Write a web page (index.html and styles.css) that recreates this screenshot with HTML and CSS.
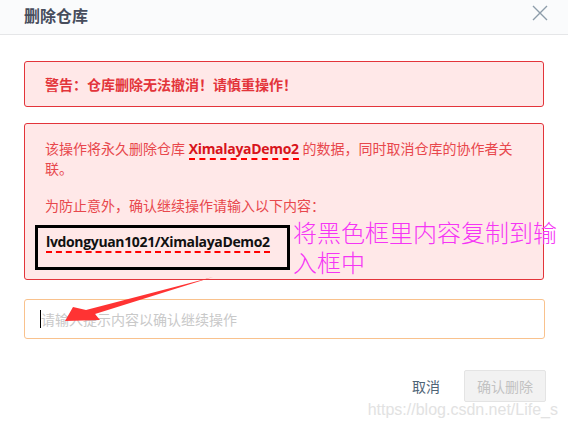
FILE: index.html
```html
<!DOCTYPE html>
<html lang="zh-CN">
<head>
<meta charset="utf-8">
<title>删除仓库</title>
<link rel="stylesheet" href="styles.css">
</head>
<body>
<div class="dialog">
  <div class="header">
    <div class="title">删除仓库</div>
    <svg class="close" width="16" height="16" viewBox="0 0 16 16"><path d="M1 1 L15 15 M15 1 L1 15" stroke="#8d9caa" stroke-width="1.4" fill="none"/></svg>
  </div>
  <div class="body">
    <div class="alert alert-warn">警告：仓库删除无法撤消！请慎重操作！</div>
    <div class="alert alert-info">
      <p class="para"><span class="seg">该操作将永久删除仓库</span> <span class="repo">XimalayaDemo2</span> <span class="seg">的数据，同时取消仓库的协作者关</span><br><span class="seg">联。</span></p>
      <p class="para para2">为防止意外，确认继续操作请输入以下内容：</p>
      <p class="code-line"><span class="code">lvdongyuan1021/XimalayaDemo2</span></p>
      <div class="mark-box"></div>
      <div class="mark-text">将黑色框里内容复制到输<br>入框中</div>
    </div>
    <div class="input"><span class="caret"></span><span class="placeholder">请输入提示内容以确认继续操作</span></div>
    <div class="footer">
      <span class="btn-cancel">取消</span>
      <span class="btn-confirm">确认删除</span>
    </div>
  </div>
</div>
<svg class="arrow" width="568" height="427" viewBox="0 0 568 427">
  <polygon points="213,277 86,310 73,307 65,321 100,320 95,314" fill="#ff3333"/>
</svg>
<div class="watermark">https://blog.csdn.net/Life_s</div>
</body>
</html>
```
FILE: styles.css
```css
html, body {
  margin: 0;
  padding: 0;
  background: #ffffff;
}
body {
  width: 568px;
  height: 427px;
  overflow: hidden;
  position: relative;
  font-family: "Open Sans", "Noto Sans CJK SC", sans-serif;
  font-size: 14px;
}
.dialog {
  width: 568px;
}
.header {
  height: 34px;
  background: #fafbfc;
  border-bottom: 1px solid #e5e6e8;
  display: flex;
  justify-content: space-between;
  align-items: flex-start;
  padding: 0 20px 0 24px;
  box-sizing: content-box;
  width: 524px;
}
.title {
  font-family: "Noto Sans CJK SC", sans-serif;
  font-size: 16px;
  font-weight: 700;
  color: #474d5c;
  line-height: 20px;
  margin-top: 5px;
}
.close {
  margin-top: 5px;
}
.body {
  padding: 26px 24px 0 24px;
}
.alert {
  border: 1px solid #e3343a;
  border-radius: 3px;
  background: #ffe8e8;
  padding: 12px 20px;
  line-height: 20px;
}
.alert-warn {
  color: #e3343a;
  font-weight: 700;
  font-family: "Noto Sans CJK SC", sans-serif;
  font-size: 14px;
  height: 20px;
}
.alert-info {
  margin-top: 16px;
  padding: 15px 20px 27px 20px;
  color: #e8474c;
  position: relative;
}
.para {
  margin: 0;
  line-height: 20px;
}
.para2 {
  margin-top: 17px;
  width: max-content;
}
.repo {
  font-weight: 700;
  color: #d8141b;
  letter-spacing: -0.3px;
  border-bottom: 2px dashed #f00;
}
.code-line {
  margin: 16px 0 0 1px;
  line-height: 20px;
  width: max-content;
}
.code {
  font-weight: 700;
  color: #111;
  letter-spacing: -0.35px;
  border-bottom: 2px dashed #f00;
}
.mark-box {
  position: absolute;
  left: 10px;
  top: 101px;
  width: 255px;
  height: 45px;
  box-sizing: border-box;
  border: 3px solid #000;
}
.mark-text {
  position: absolute;
  left: 268px;
  top: 93px;
  font-family: "Noto Sans CJK SC", sans-serif;
  font-weight: 300;
  font-size: 24px;
  line-height: 30px;
  color: #f535f5;
  white-space: nowrap;
}
.input {
  margin-top: 19px;
  height: 38px;
  border: 1px solid #f9c28d;
  border-radius: 3px;
  display: flex;
  align-items: center;
  padding-left: 15px;
  margin-right: -1px;
}
.caret {
  width: 1px;
  height: 18px;
  background: #000;
}
.placeholder {
  color: #c9c9c9;
  font-family: "Noto Sans CJK SC", sans-serif;
  font-size: 14px;
}
.footer {
  margin-top: 31px;
  display: flex;
  justify-content: flex-end;
  align-items: center;
  gap: 24px;
  margin-right: -2px;
}
.btn-cancel {
  color: #4e6476;
  font-family: "Noto Sans CJK SC", sans-serif;
  font-size: 14px;
}
.btn-confirm {
  height: 30px;
  line-height: 30px;
  padding: 0 12px;
  border: 1px solid #e4e4e4;
  background: #f2f2f2;
  color: #c2c2c2;
  border-radius: 2px;
  font-family: "Noto Sans CJK SC", sans-serif;
  font-size: 14px;
}
.arrow {
  position: absolute;
  left: 0;
  top: 0;
  pointer-events: none;
}
.watermark {
  position: absolute;
  right: 10px;
  top: 401px;
  font-family: "Liberation Sans", sans-serif;
  font-size: 16px;
  line-height: 18px;
  color: #e2e2e2;
}
```
